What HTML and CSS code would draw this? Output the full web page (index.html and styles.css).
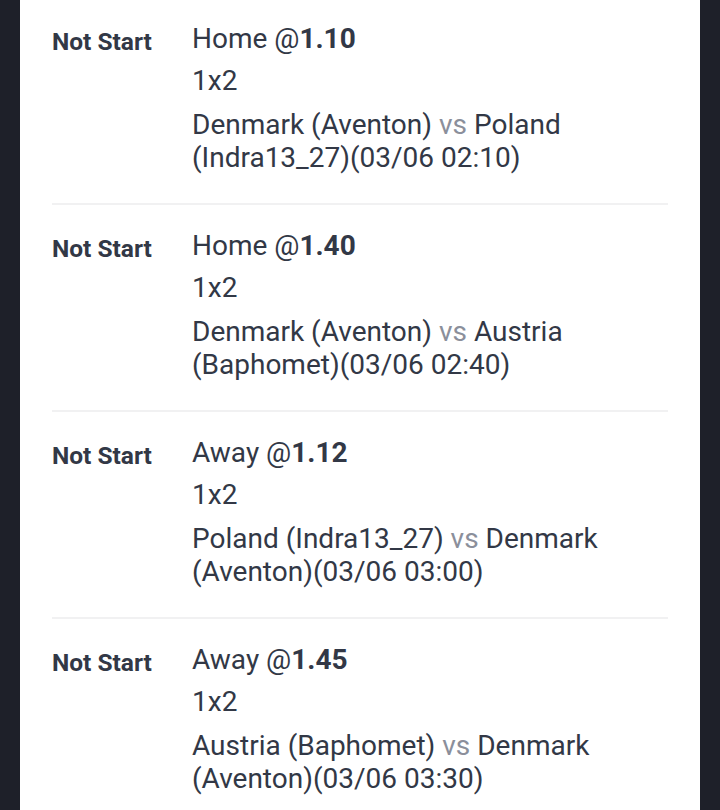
FILE: index.html
```html
<!DOCTYPE html>
<html>
<head>
<meta charset="utf-8">
<link rel="stylesheet" href="styles.css">
</head>
<body>
<div class="panel">
  <div class="list">
    <div class="row">
      <div class="status">Not Start</div>
      <div class="info">
        <div class="pick">Home @<b>1.10</b></div>
        <div class="market">1x2</div>
        <div class="match">Denmark (Aventon) <span class="vs">vs</span> Poland (Indra13_27)(03/06 02:10)</div>
      </div>
    </div>
    <div class="row">
      <div class="status">Not Start</div>
      <div class="info">
        <div class="pick">Home @<b>1.40</b></div>
        <div class="market">1x2</div>
        <div class="match">Denmark (Aventon) <span class="vs">vs</span> Austria (Baphomet)(03/06 02:40)</div>
      </div>
    </div>
    <div class="row">
      <div class="status">Not Start</div>
      <div class="info">
        <div class="pick">Away @<b>1.12</b></div>
        <div class="market">1x2</div>
        <div class="match">Poland (Indra13_27) <span class="vs">vs</span> Denmark (Aventon)(03/06 03:00)</div>
      </div>
    </div>
    <div class="row">
      <div class="status">Not Start</div>
      <div class="info">
        <div class="pick">Away @<b>1.45</b></div>
        <div class="market">1x2</div>
        <div class="match">Austria (Baphomet) <span class="vs">vs</span> Denmark (Aventon)(03/06 03:30)</div>
      </div>
    </div>
  </div>
</div>
</body>
</html>
```
FILE: styles.css
```css
html, body {
  margin: 0;
  padding: 0;
  background: #1e2029;
  height: 810px;
  overflow: hidden;
}
body {
  font-family: Roboto, "Noto Sans", sans-serif;
  color: #323846;
}
.panel {
  display: flow-root;
  margin: 0 20px;
  background: #ffffff;
  height: 810px;
  padding: 0 32px;
  box-sizing: border-box;
}
.list {
  margin-top: -2px;
}
.row {
  display: grid;
  grid-template-columns: 140px 1fr;
  padding: 24px 0 29px;
  border-bottom: 2px solid #f1f1f2;
}
.status {
  font-size: 24.5px;
  font-weight: 700;
  line-height: 33px;
  padding-top: 3px;
}
.info {
  font-size: 28px;
  line-height: 33px;
}
.pick {
  margin-bottom: 9px;
}
.pick b {
  font-weight: 700;
}
.market {
  margin-bottom: 11px;
}
.vs {
  color: #8b8f9b;
}
```
